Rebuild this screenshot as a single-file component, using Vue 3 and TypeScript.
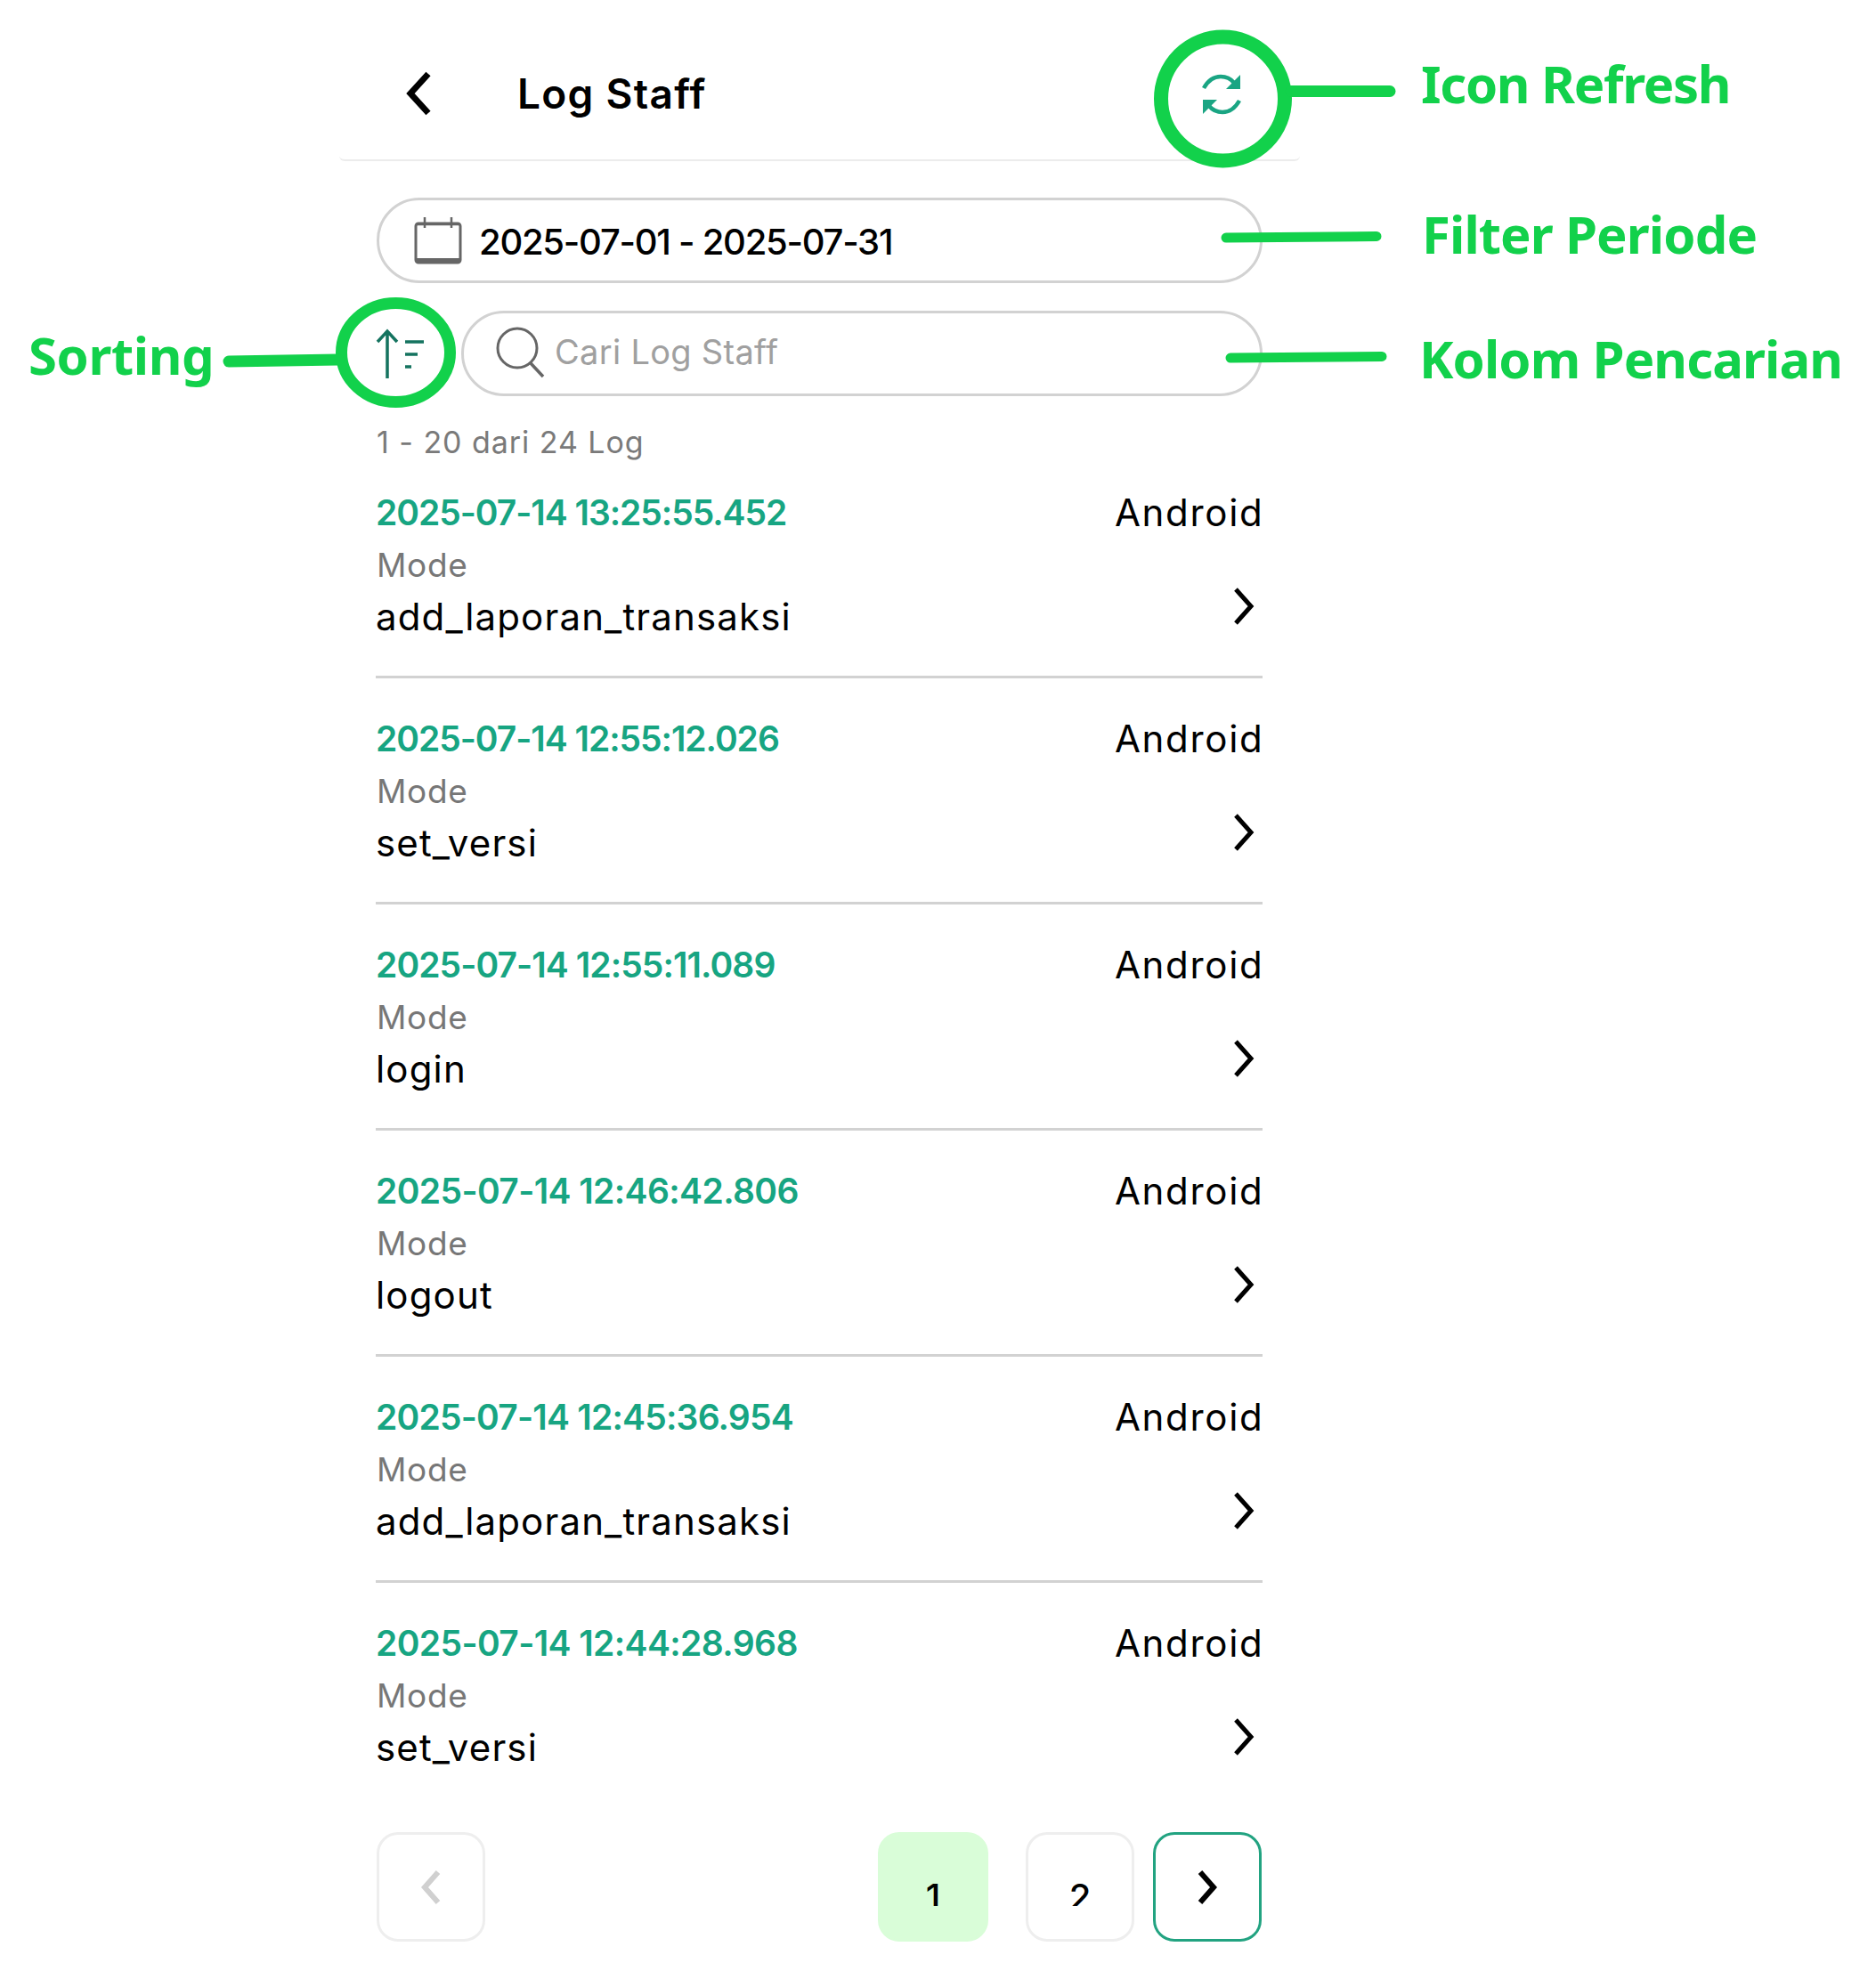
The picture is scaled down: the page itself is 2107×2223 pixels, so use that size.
<script setup lang="ts">
interface LogRow { time: string; platform: string; mode: string; track: number }
const rows: LogRow[] = [
  { time: '2025-07-14 13:25:55.452', platform: 'Android', mode: 'add_laporan_transaksi', track: -1.04 },
  { time: '2025-07-14 12:55:12.026', platform: 'Android', mode: 'set_versi', track: -1.04 },
  { time: '2025-07-14 12:55:11.089', platform: 'Android', mode: 'login', track: -0.92 },
  { time: '2025-07-14 12:46:42.806', platform: 'Android', mode: 'logout', track: -0.61 },
  { time: '2025-07-14 12:45:36.954', platform: 'Android', mode: 'add_laporan_transaksi', track: -0.79 },
  { time: '2025-07-14 12:44:28.968', platform: 'Android', mode: 'set_versi', track: -0.61 },
]
</script>

<template>
  <div class="page">
    <div class="phone">
      <header class="header">
        <svg class="back" width="32" height="50" viewBox="0 0 32 50"><path d="M26 3 L6 25 L26 47" fill="none" stroke="#000" stroke-width="7" /></svg>
        <h1 class="title">Log Staff</h1>
        <svg class="refresh" width="44" height="48" viewBox="0 0 44 48">
          <path d="M2 17 C7 8 14 4 21 4 C27 4 32 6 36 11" fill="none" stroke="#1aa583" stroke-width="4.5" />
          <polygon points="43,2 43,18 27,18" fill="#1aa583" />
          <path d="M42 31 C37 40 30 44 23 44 C17 44 12 42 8 37" fill="none" stroke="#1aa583" stroke-width="4.5" />
          <polygon points="1,46 1,30 17,30" fill="#1aa583" />
        </svg>
      </header>

      <div class="filters">
        <div class="pill date-pill">
          <svg width="54" height="54" viewBox="0 0 54 54">
            <rect x="2" y="8" width="50" height="44" rx="3" fill="none" stroke="#666" stroke-width="3" />
            <path d="M2 49 H52" stroke="#666" stroke-width="4" />
            <path d="M12 1 V13 M42 1 V13 M2 9 H52" stroke="#666" stroke-width="2.5" />
          </svg>
          <span class="date-text">2025-07-01 - 2025-07-31</span>
        </div>
        <div class="search-row">
          <svg class="sort" width="56" height="56" viewBox="0 0 56 56">
            <path d="M14 3 V56 M3 15 L14 3 L25 15" fill="none" stroke="#14735f" stroke-width="3.5" />
            <path d="M34 15 H55 M34 29 H48 M34 43 H41" stroke="#14735f" stroke-width="3.5" />
          </svg>
          <div class="pill search-pill">
            <svg width="56" height="60" viewBox="0 0 56 60">
              <circle cx="24" cy="24" r="22" fill="none" stroke="#666" stroke-width="3" />
              <path d="M39 41 L53 56" stroke="#666" stroke-width="3.5" />
            </svg>
            <span class="placeholder">Cari Log Staff</span>
          </div>
        </div>
      </div>

      <p class="count">1 - 20 dari 24 Log</p>

      <ul class="list">
        <li v-for="(row, i) in rows" :key="i" class="row" :class="{ last: i === rows.length - 1 }">
          <div class="row-main">
            <div class="time" :style="{ letterSpacing: row.track + 'px' }">{{ row.time }}</div>
            <div class="label">Mode</div>
            <div class="value">{{ row.mode }}</div>
          </div>
          <div class="row-side">
            <div class="platform">{{ row.platform }}</div>
            <svg class="chev" width="24" height="42" viewBox="0 0 24 42"><path d="M3 2 L20 21 L3 40" fill="none" stroke="#000" stroke-width="5" /></svg>
          </div>
        </li>
      </ul>

      <nav class="pager">
        <button class="pg">
          <svg width="24" height="38" viewBox="0 0 24 38"><path d="M20 2 L5 19 L20 36" fill="none" stroke="#d0d0d0" stroke-width="6" /></svg>
        </button>
        <span class="grow"></span>
        <button class="pg active"><span class="digit">1</span></button>
        <button class="pg two"><span class="digit">2</span></button>
        <button class="pg next">
          <svg width="24" height="38" viewBox="0 0 24 38"><path d="M4 2 L19 19 L4 36" fill="none" stroke="#000" stroke-width="6" /></svg>
        </button>
      </nav>
    </div>

    <svg class="marks" width="2107" height="2223" viewBox="0 0 2107 2223">
      <g fill="none" stroke="#12d14b">
        <circle cx="1373.5" cy="111" r="69.5" stroke-width="16" />
        <ellipse cx="444.5" cy="396" rx="61" ry="55.5" stroke-width="13" />
        <path d="M1450 102.5 H1561" stroke-width="13" stroke-linecap="round" />
        <path d="M1377 267 L1546 265.5" stroke-width="11" stroke-linecap="round" />
        <path d="M1382 402 L1552 400.5" stroke-width="11" stroke-linecap="round" />
        <path d="M257 406 L380 404" stroke-width="13" stroke-linecap="round" />
      </g>
    </svg>
    <span class="note n-refresh">Icon Refresh</span>
    <span class="note n-filter">Filter Periode</span>
    <span class="note n-search">Kolom Pencarian</span>
    <span class="note n-sort">Sorting</span>
  </div>
</template>

<style>
html, body { margin: 0; background: #fff; }
</style>

<style scoped>
.page {
  position: relative;
  width: 2107px;
  height: 2223px;
  overflow: hidden;
  background: #fff;
  font-family: Inter, "Noto Sans", sans-serif;
  color: #000;
}
.phone {
  width: 1079px;
  margin-left: 381px;
  box-sizing: border-box;
}
.header {
  height: 181px;
  box-sizing: border-box;
  display: flex;
  align-items: center;
  border-bottom: 2px solid #ececec;
  border-radius: 0 0 6px 6px;
  padding: 0 66px 0 74px;
}
.back { margin-top: 30px; }
.title {
  margin: 30px 0 0 94px;
  font-size: 46px;
  line-height: 50px;
  font-weight: 600;
  letter-spacing: 1.3px;
  flex: 1;
}
.refresh { margin-top: 32px; }
.filters {
  padding: 41px 42px 0 42px;
  display: flex;
  flex-direction: column;
  gap: 31px;
}
.pill {
  box-sizing: border-box;
  height: 96px;
  border: 3px solid #d2d2d2;
  border-radius: 48px;
  display: flex;
  align-items: center;
}
.date-pill { padding-left: 39px; gap: 19px; }
.date-text { font-size: 40px; font-weight: 500; letter-spacing: -1.25px; padding-top: 2px; }
.search-row { display: flex; align-items: center; margin-left: -2px; }
.sort { margin-right: 41px; }
.search-pill { flex: 1; padding-left: 36px; gap: 10px; }
.placeholder { font-size: 38px; color: #a0a0a0; letter-spacing: 0.3px; padding-bottom: 4px; }
.count {
  margin: 32px 0 0 42px;
  font-size: 34px;
  line-height: 40px;
  color: #7a7a7a;
  letter-spacing: 0.95px;
}
.list {
  list-style: none;
  margin: 0 42px 0 41px;
  padding: 0;
}
.row {
  display: flex;
  justify-content: space-between;
  box-sizing: border-box;
  height: 254px;
  padding-top: 39px;
  border-bottom: 3px solid #d2d2d2;
}
.row:not(:first-child) { padding-top: 48px; }
.row:first-child { height: 245px; }
.row.last { border-bottom: none; }
.time {
  font-size: 39px;
  line-height: 40px;
  font-weight: 600;
  color: #17a582;
}
.label {
  margin-top: 19px;
  margin-left: 1px;
  font-size: 37px;
  line-height: 40px;
  color: #777;
  letter-spacing: 0.7px;
}
.value {
  margin-top: 18px;
  font-size: 42px;
  line-height: 40px;
  letter-spacing: 1.15px;
}
.row-side {
  display: flex;
  flex-direction: column;
  align-items: flex-end;
}
.platform { font-size: 42px; line-height: 40px; letter-spacing: 1.7px; margin-right: -1.5px; }
.chev { margin: 64px 9px 0 0; }
.pager {
  display: flex;
  margin: 26px 43px 0 42px;
  gap: 21px;
}
.grow { flex: 1; }
.pg {
  box-sizing: border-box;
  width: 122px;
  height: 123px;
  padding: 0;
  border: 3px solid #eeeeee;
  border-radius: 24px;
  background: #fff;
  display: flex;
  align-items: center;
  justify-content: center;
  font-family: inherit;
}
.pg.active { width: 124px; background: #d9fdd8; border-color: #d9fdd8; margin-right: 21px; }
.pg.next { border-color: #22a381; }
.digit {
  display: block;
  height: 25px;
  overflow: hidden;
  margin-top: 18px;
  font-size: 40px;
  line-height: 30px;
  font-weight: 500;
  color: #000;
}
.marks { position: absolute; left: 0; top: 0; pointer-events: none; }
.note {
  position: absolute;
  font-family: "Noto Sans", sans-serif;
  font-size: 58px;
  line-height: 70px;
  font-weight: 700;
  color: #12d14b;
  letter-spacing: -1.3px;
  white-space: nowrap;
}
.n-refresh { left: 1596px; top: 59px; }
.n-filter { left: 1597px; top: 228px; letter-spacing: -0.9px; }
.n-search { left: 1594px; top: 368px; letter-spacing: -0.9px; }
.n-sort { left: 32px; top: 364px; letter-spacing: -0.4px; }
</style>
